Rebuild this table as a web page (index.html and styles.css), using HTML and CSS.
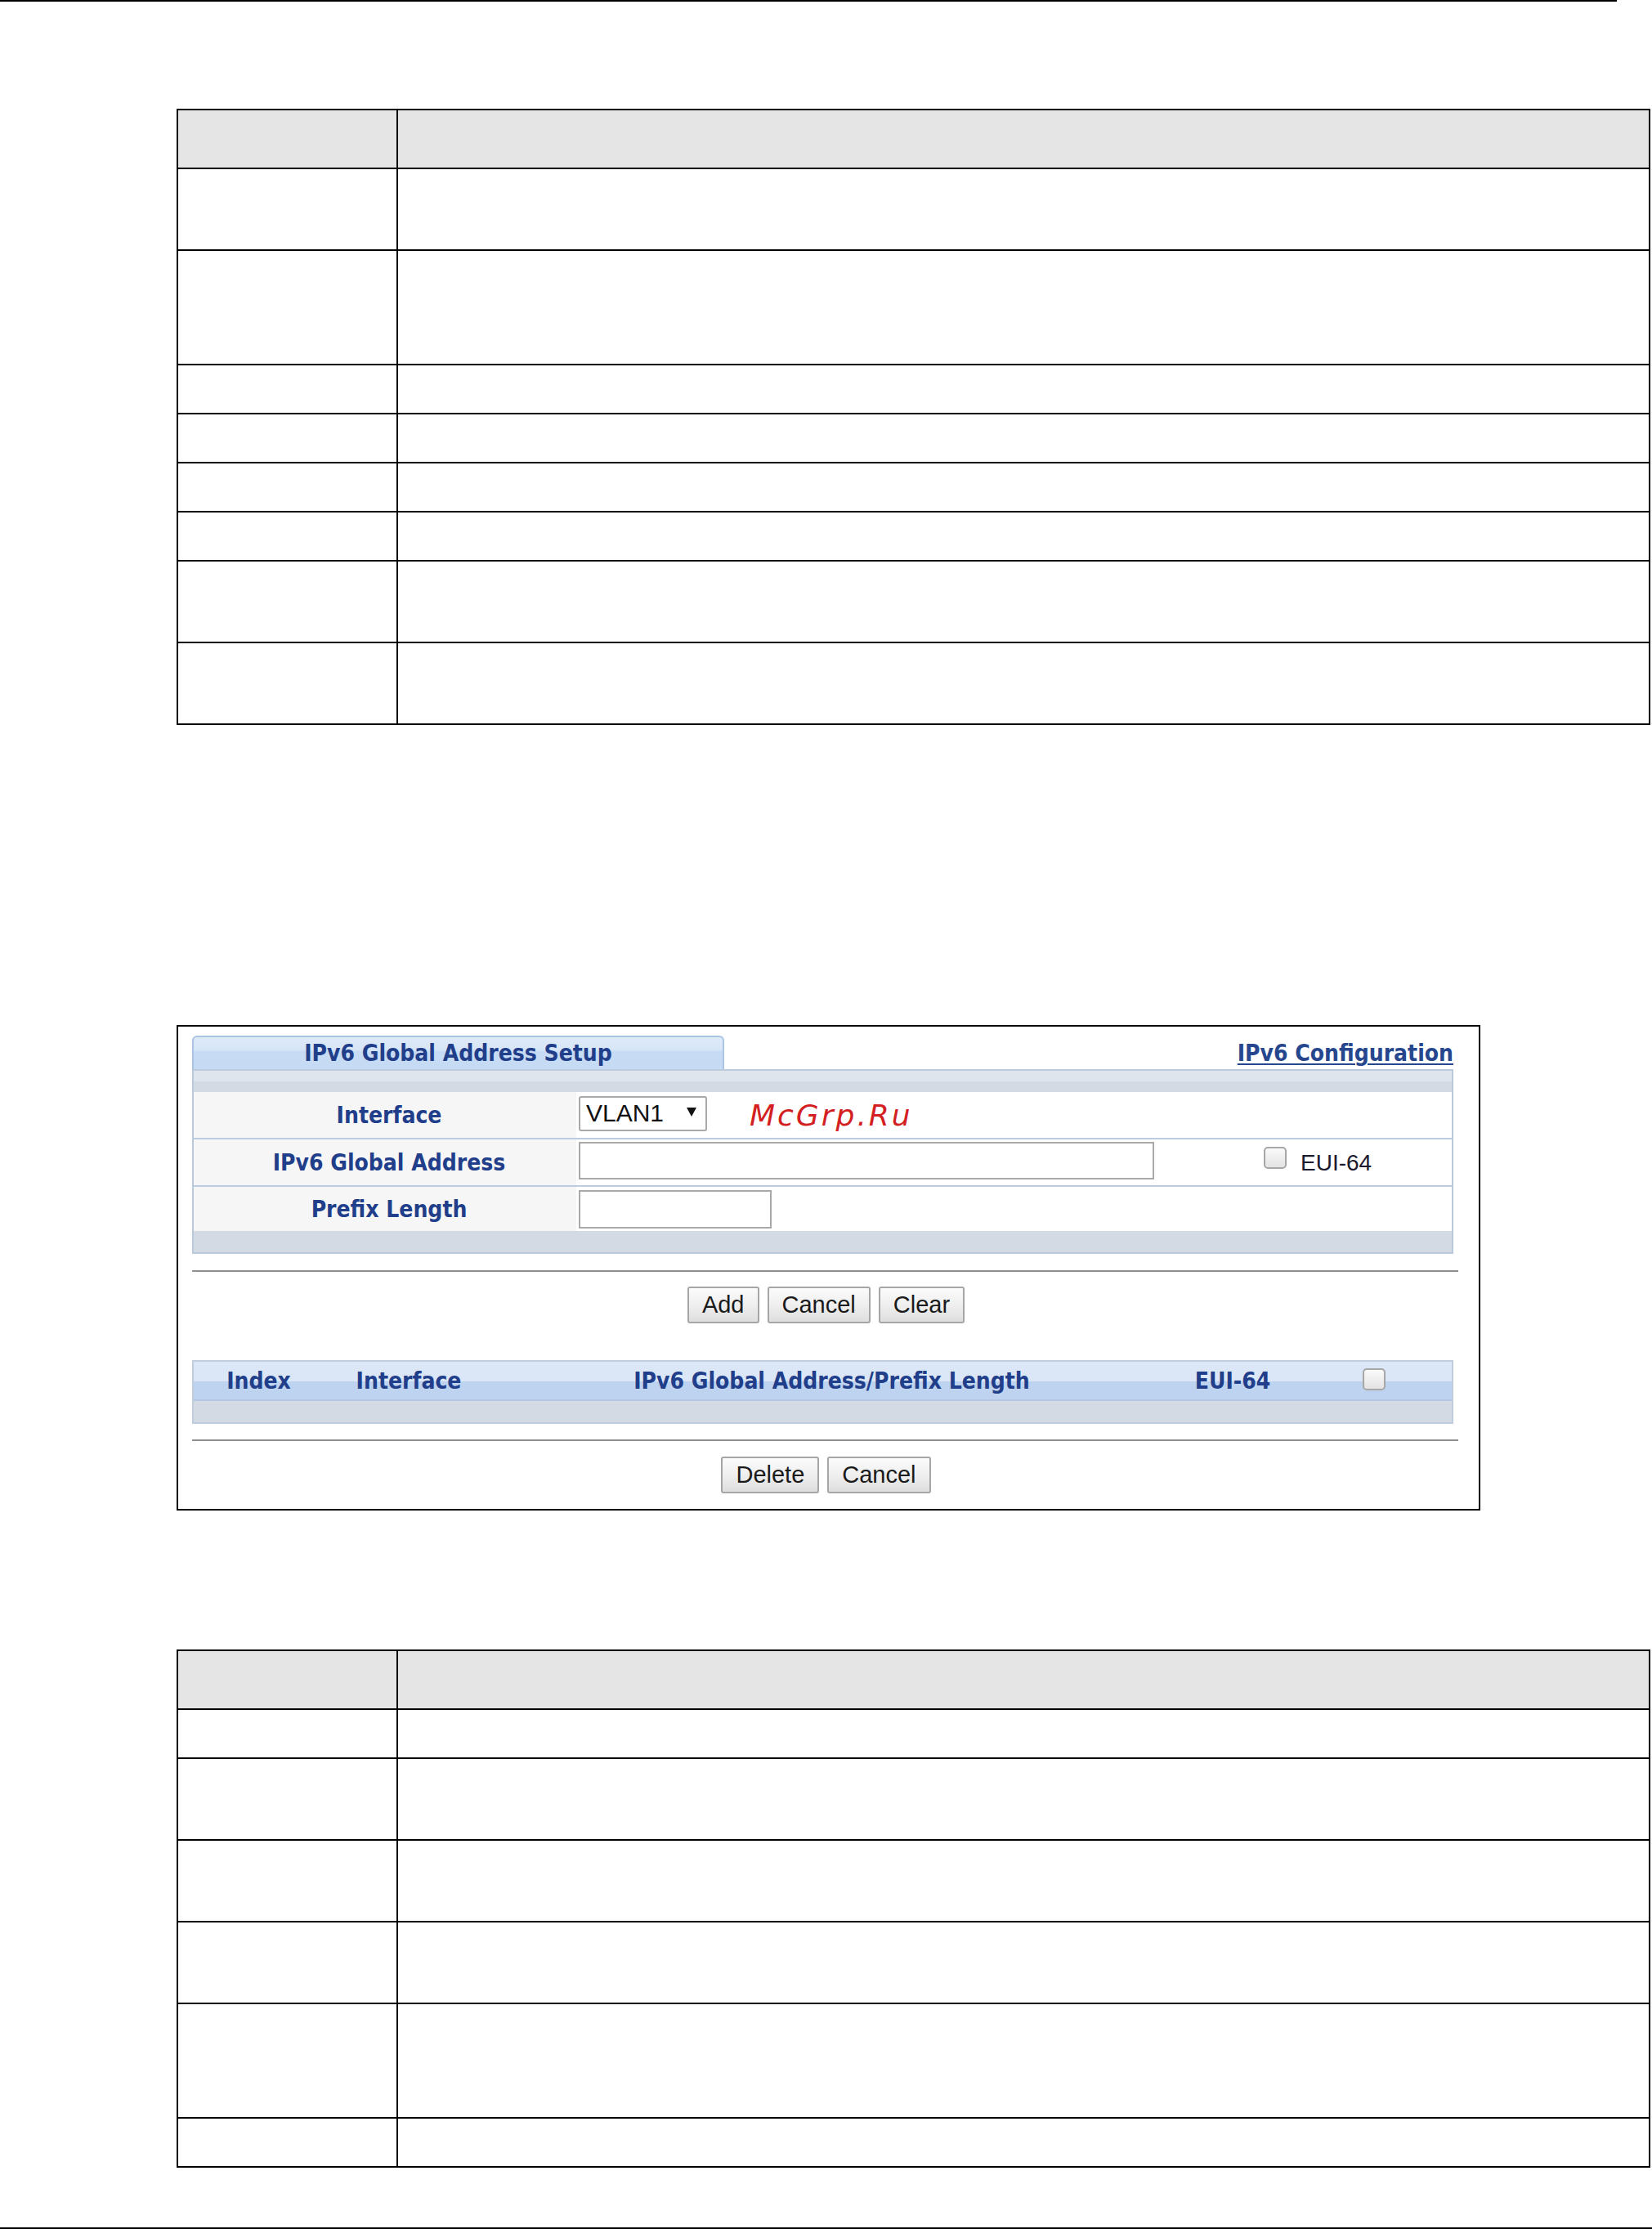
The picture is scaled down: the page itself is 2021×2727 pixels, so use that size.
FILE: index.html
```html
<!DOCTYPE html>
<html lang="en">
<head>
<meta charset="utf-8">
<title>IPv6 Global Address Setup</title>
<link rel="stylesheet" href="styles.css">
</head>
<body>
<div class="rule rule-top"></div>

<table class="doc-table t1">
  <colgroup><col class="c-label"><col class="c-desc"></colgroup>
  <tr class="head h72"><td></td><td></td></tr>
  <tr class="h100"><td></td><td></td></tr>
  <tr class="h140"><td></td><td></td></tr>
  <tr class="h60"><td></td><td></td></tr>
  <tr class="h60"><td></td><td></td></tr>
  <tr class="h60"><td></td><td></td></tr>
  <tr class="h60"><td></td><td></td></tr>
  <tr class="h100"><td></td><td></td></tr>
  <tr class="h100"><td></td><td></td></tr>
</table>

<div class="ui-frame">
  <div class="tab-row">
    <div class="tab">IPv6 Global Address Setup</div>
    <a class="cfg-link" href="#">IPv6 Configuration</a>
  </div>

  <div class="panel">
    <div class="band band-top"></div>
    <div class="form-row row-a">
      <div class="label-cell">Interface</div>
      <div class="value-cell">
        <div class="select"><span class="select-text">VLAN1</span><svg class="select-arrow" width="12" height="12" viewBox="0 0 12 12"><polygon points="0,1 12,1 6,12" fill="#111"/></svg></div>
        <span class="watermark">McGrp.Ru</span>
      </div>
    </div>
    <div class="form-row row-b">
      <div class="label-cell">IPv6 Global Address</div>
      <div class="value-cell">
        <div class="text-input addr-input"></div>
        <span class="checkbox eui-check"></span>
        <span class="plain-text">EUI-64</span>
      </div>
    </div>
    <div class="form-row row-c">
      <div class="label-cell">Prefix Length</div>
      <div class="value-cell">
        <div class="text-input prefix-input"></div>
      </div>
    </div>
    <div class="band band-bottom"></div>
  </div>

  <div class="sep"></div>
  <div class="btn-row">
    <button class="btn" type="button">Add</button>
    <button class="btn" type="button">Cancel</button>
    <button class="btn" type="button">Clear</button>
  </div>

  <div class="list">
    <div class="list-head">
      <span>Index</span>
      <span>Interface</span>
      <span>IPv6 Global Address/Prefix Length</span>
      <span>EUI-64</span>
      <span><span class="checkbox head-check"></span></span>
    </div>
    <div class="band list-band"></div>
  </div>

  <div class="sep sep-2"></div>
  <div class="btn-row btn-row-2">
    <button class="btn" type="button">Delete</button>
    <button class="btn" type="button">Cancel</button>
  </div>
</div>

<table class="doc-table t2">
  <colgroup><col class="c-label"><col class="c-desc"></colgroup>
  <tr class="head h72"><td></td><td></td></tr>
  <tr class="h60"><td></td><td></td></tr>
  <tr class="h100"><td></td><td></td></tr>
  <tr class="h100"><td></td><td></td></tr>
  <tr class="h100"><td></td><td></td></tr>
  <tr class="h140"><td></td><td></td></tr>
  <tr class="h60"><td></td><td></td></tr>
</table>

<div class="rule rule-bottom"></div>
</body>
</html>
```

FILE: styles.css
```css
* { box-sizing: border-box; }

html, body {
  margin: 0;
  padding: 0;
  background: #ffffff;
}

body {
  width: 2021px;
  font-family: "Liberation Sans", Arial, sans-serif;
  color: #111;
}

.rule {
  height: 2px;
  background: #000;
}
.rule-top { width: 1978px; }
.rule-bottom { width: 2021px; margin-top: 73px; height: 3px; }

/* documentation tables */
.doc-table {
  border-collapse: separate;
  border-spacing: 0;
  table-layout: fixed;
  width: 1803px;
  margin-left: 216px;
  border-top: 2px solid #000;
  border-left: 2px solid #000;
}
.t1 { margin-top: 131px; }
.t2 { margin-top: 170px; }
.doc-table col.c-label { width: 269px; }
.doc-table td {
  padding: 0;
  border-right: 2px solid #000;
  border-bottom: 2px solid #000;
}
.doc-table tr.head td { background: #e5e5e5; }
.h60 td { height: 60px; }
.h72 td { height: 72px; }
.h100 td { height: 100px; }
.h140 td { height: 140px; }

/* UI screenshot frame */
.ui-frame {
  margin-top: 367px;
  margin-left: 216px;
  width: 1595px;
  height: 594px;
  border: 2px solid #000;
  padding: 11px 25px 0 17px;
}

.tab-row {
  display: flex;
  justify-content: space-between;
  align-items: baseline;
  height: 41px;
}

.tab {
  width: 651px;
  height: 41px;
  border: 2px solid #abc4e4;
  border-bottom: none;
  border-radius: 6px 6px 0 0;
  background: linear-gradient(to bottom, #dfeaf8 0%, #d6e5f6 40%, #c7dcf4 45%, #c5daf3 100%);
  text-align: center;
  font-family: "DejaVu Sans", Verdana, sans-serif;
  font-stretch: condensed;
  font-weight: bold;
  font-size: 28px;
  line-height: 40px;
  color: #213e8a;
}

.cfg-link {
  margin-right: 6px;
  font-family: "DejaVu Sans", Verdana, sans-serif;
  font-stretch: condensed;
  font-weight: bold;
  font-size: 28px;
  color: #26468e;
  text-decoration: underline;
  text-decoration-thickness: 2px;
  text-underline-offset: 3px;
}

.panel {
  width: 1543px;
  border-left: 2px solid #bac9dc;
  border-right: 2px solid #bac9dc;
  border-bottom: 2px solid #bac9dc;
}

.band-top {
  height: 28px;
  border-top: 2px solid #bccadb;
  background: linear-gradient(to bottom, #dfe5ed 0%, #dfe5ed 50%, #d2dae4 50%, #d2dae4 100%);
}
.band-bottom {
  height: 26px;
  background: #d2dae4;
}

.form-row {
  display: flex;
  align-items: stretch;
}
.row-a { height: 58px; border-bottom: 2px solid #bccbdf; }
.row-b { height: 58px; border-bottom: 2px solid #bccbdf; }
.row-c { height: 54px; }

.label-cell {
  width: 468px;
  background: #f6f6f6;
  display: flex;
  align-items: center;
  justify-content: center;
  font-family: "DejaVu Sans", Verdana, sans-serif;
  font-stretch: condensed;
  font-weight: bold;
  font-size: 28px;
  color: #213e8a;
  padding-left: 10px;
}

.value-cell {
  flex: 1;
  display: flex;
  align-items: center;
  padding-left: 3px;
  background: #fff;
}

.select {
  width: 157px;
  height: 43px;
  border: 2px solid #a9a9a9;
  border-radius: 3px;
  background: #fff;
  display: flex;
  align-items: center;
  padding-left: 7px;
  margin-top: -4px;
}
.select-text {
  font-size: 30px;
  color: #111;
}
.select-arrow {
  margin-left: 28px;
  margin-top: -4px;
}

.watermark {
  margin-left: 52px;
  font-family: "DejaVu Sans", Verdana, sans-serif;
  font-style: italic;
  font-size: 36px;
  letter-spacing: 3px;
  color: #d41f22;
}

.text-input {
  border: 2px solid #a9a9a9;
  background: #fff;
}
.addr-input {
  width: 704px;
  height: 46px;
  margin-top: -4px;
}
.prefix-input {
  width: 236px;
  height: 47px;
}

.checkbox {
  display: inline-block;
  width: 28px;
  height: 27px;
  border: 2px solid #a7a7a7;
  border-radius: 5px;
  background: linear-gradient(to bottom, #fafafa 0%, #e3e3e3 100%);
}
.eui-check {
  margin-left: 134px;
  margin-top: -12px;
}
.plain-text {
  margin-left: 17px;
  font-size: 28px;
  color: #1c1a2e;
  margin-top: 2px;
}

.sep {
  height: 2px;
  background: #8f8f8f;
  margin-top: 20px;
}

.btn-row {
  display: flex;
  justify-content: center;
  gap: 10px;
  margin-top: 18px;
  padding-left: 2px;
}
.btn {
  height: 45px;
  padding: 0 16px;
  border: 2px solid #a6a6a6;
  border-radius: 3px;
  background: linear-gradient(to bottom, #fbfbfb 0%, #efefef 50%, #dedede 100%);
  font-family: "Liberation Sans", Arial, sans-serif;
  font-size: 29px;
  color: #1a1a1a;
  line-height: 41px;
}

.list {
  width: 1543px;
  margin-top: 45px;
  border: 2px solid #bfcddf;
}
.list-head {
  height: 48px;
  display: grid;
  grid-template-columns: 159px 208px 827px 154px 1fr;
  align-items: center;
  background: linear-gradient(to bottom, #dbe7f6 0%, #dbe7f6 52%, #bdd3ef 52%, #bdd3ef 100%);
  border-bottom: 2px solid #b3c6df;
  font-family: "DejaVu Sans", Verdana, sans-serif;
  font-stretch: condensed;
  font-weight: bold;
  font-size: 28px;
  color: #213e8a;
  text-align: center;
}
.head-check {
  vertical-align: middle;
  margin-top: -6px;
}
.list-band {
  height: 26px;
  background: #d3dae3;
}

.sep-2 { margin-top: 19px; }
.btn-row-2 { margin-top: 19px; }
```
